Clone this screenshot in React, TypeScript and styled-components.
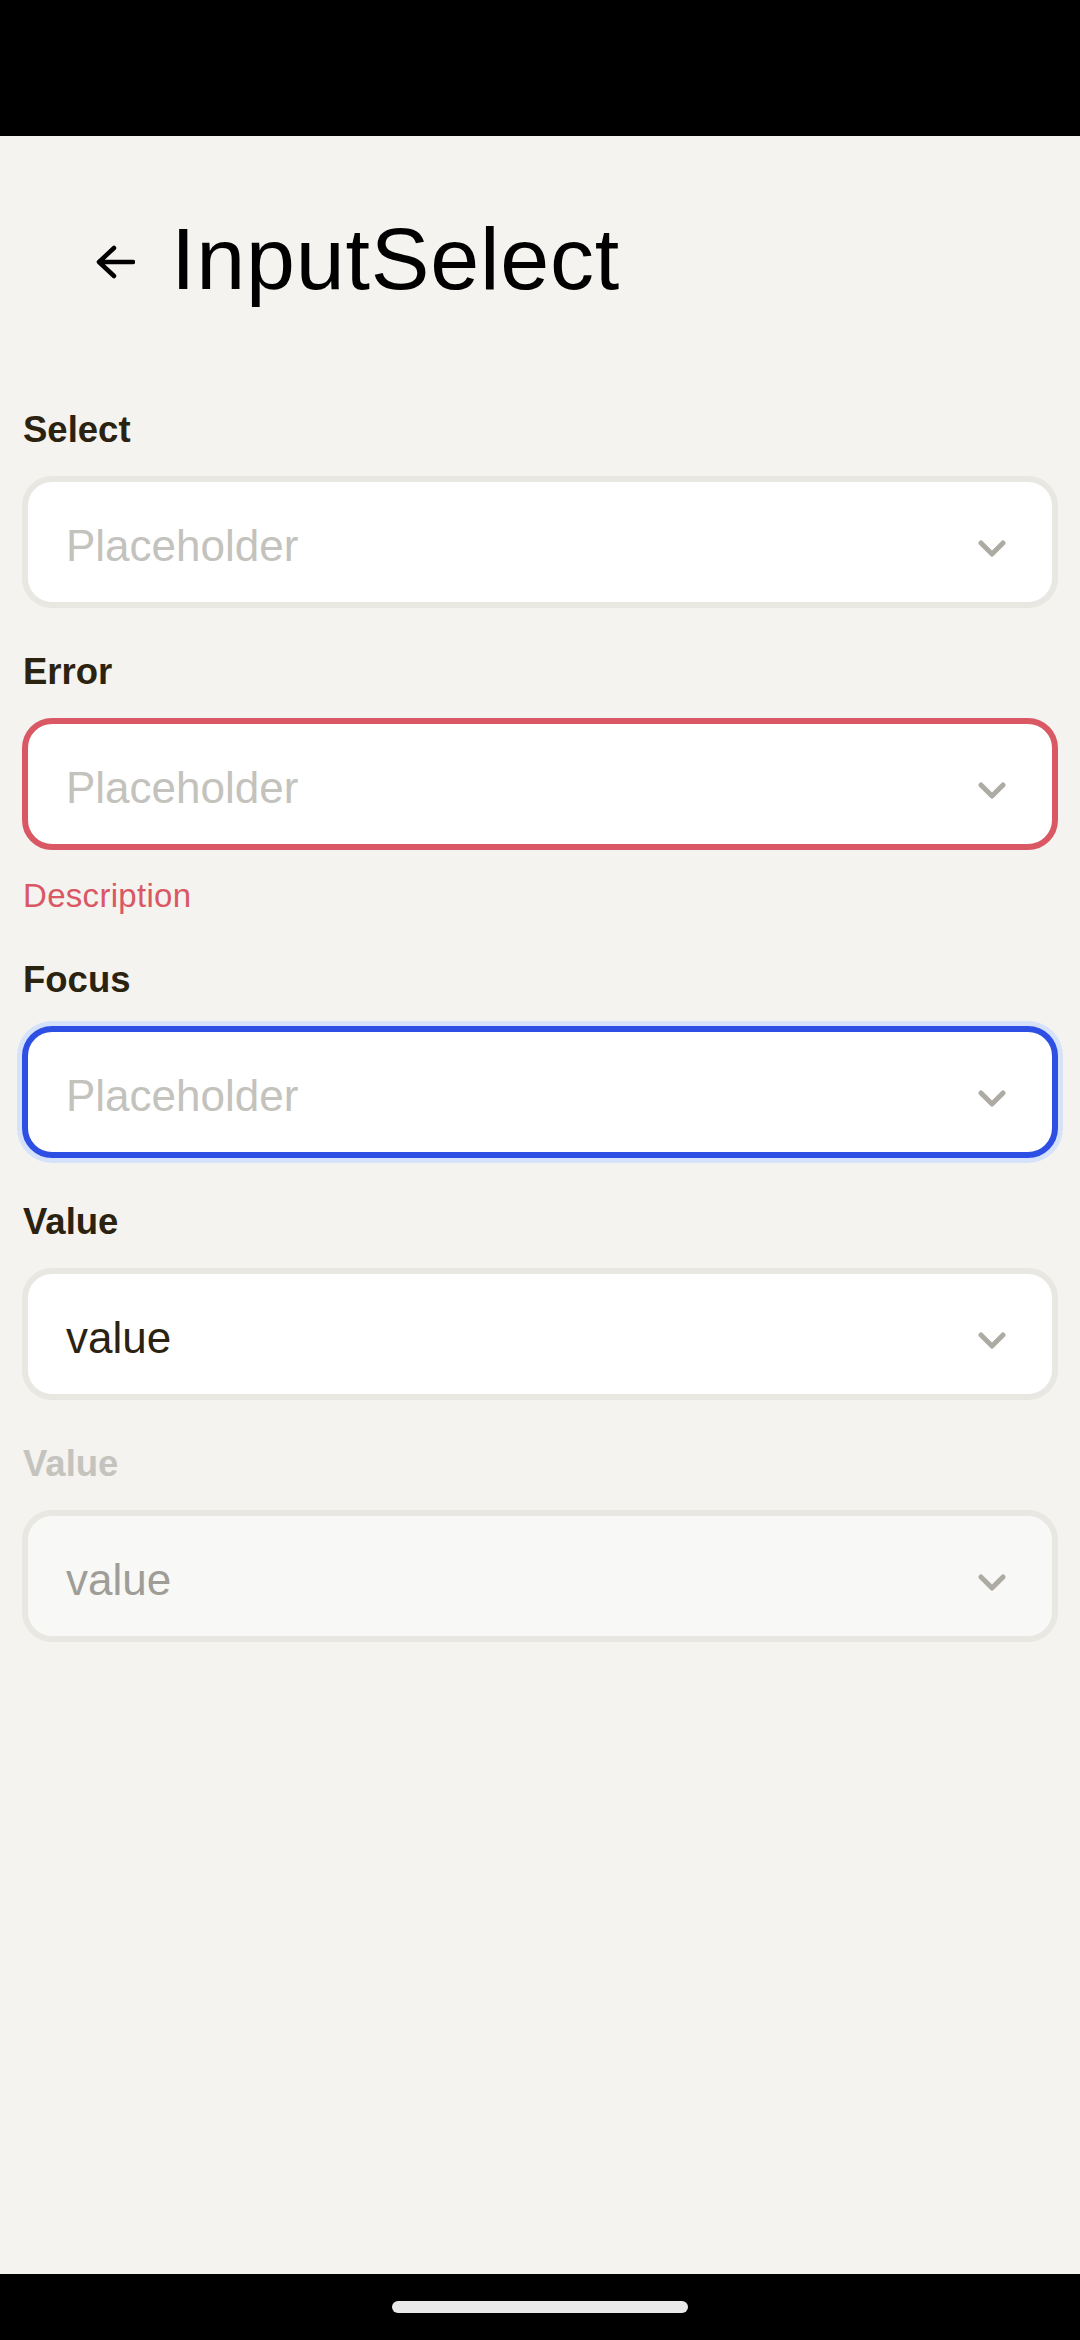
import React from "react";
import styled, { createGlobalStyle, css } from "styled-components";

const Global = createGlobalStyle`
  html, body { margin: 0; padding: 0; background: #F4F3EF; }
  body { font-family: "Liberation Sans", Arial, sans-serif; }
  * { box-sizing: border-box; }
`;

const Screen = styled.div`
  min-height: 2340px;
  display: flex;
  flex-direction: column;
  background: #F4F3EF;
`;

const StatusBar = styled.div`
  height: 136px;
  flex-shrink: 0;
  background: #000;
`;

const Header = styled.header`
  display: flex;
  align-items: center;
  gap: 36px;
  padding: 73px 0 0 95px;
`;

const BackButton = styled.button`
  display: flex;
  align-items: center;
  justify-content: center;
  padding: 0;
  margin-top: 6px;
  border: none;
  background: none;
  width: 40px;
  height: 34px;
`;

const Title = styled.h1`
  margin: 0;
  font-size: 88px;
  line-height: 100px;
  font-weight: 400;
  letter-spacing: 0.8px;
  color: #000;
`;

const Fields = styled.main`
  flex: 1;
  display: flex;
  flex-direction: column;
  gap: 42px;
  padding: 99px 22px 0;
`;

const Field = styled.div`
  display: flex;
  flex-direction: column;
`;

const Label = styled.label<{ $disabled?: boolean }>`
  font-size: 36.5px;
  line-height: 44px;
  font-weight: 700;
  margin-bottom: 24px;
  padding-left: 1px;
  color: ${(p) => (p.$disabled ? "#C4C3BE" : "#2B2310")};
`;

type Variant = "default" | "error" | "focus" | "disabled";

const Box = styled.div<{ $variant: Variant }>`
  height: 132px;
  display: flex;
  align-items: center;
  padding: 0 46px 0 38px;
  border-radius: 30px;
  border: 6px solid #E8E7E2;
  background: #fff;
  ${(p) =>
    p.$variant === "error" &&
    css`
      border-color: #D95864;
    `}
  ${(p) =>
    p.$variant === "focus" &&
    css`
      border-color: #2D4FE4;
      box-shadow: 0 0 0 5px #D6E1FA;
    `}
  ${(p) =>
    p.$variant === "disabled" &&
    css`
      background: #F8F8F6;
    `}
`;

const BoxText = styled.span<{ $tone: "placeholder" | "value" | "disabled" }>`
  flex: 1;
  padding-top: 7px;
  font-size: 44px;
  color: ${(p) =>
    p.$tone === "placeholder" ? "#C3C2BD" : p.$tone === "disabled" ? "#9F9D97" : "#2B2310"};
`;

const Chevron = styled.svg`
  width: 28px;
  height: 18px;
  margin-top: 13px;
  flex-shrink: 0;
`;

const Description = styled.div`
  margin-top: 26px;
  padding-left: 1px;
  font-size: 33px;
  line-height: 40px;
  letter-spacing: 0.3px;
  color: #D95864;
`;

const NavBar = styled.div`
  height: 66px;
  flex-shrink: 0;
  background: #000;
  display: flex;
  justify-content: center;
  padding-top: 27px;
`;

const HomeIndicator = styled.div`
  width: 296px;
  height: 12px;
  border-radius: 6px;
  background: #E9E9E9;
`;

const ArrowIcon = () => (
  <svg width="40" height="34" viewBox="0 0 40 34" fill="none">
    <path
      d="M38 17H4M19 3L4 17L19 31"
      stroke="#000"
      strokeWidth="4.5"
      strokeLinecap="round"
      strokeLinejoin="round"
    />
  </svg>
);

const ChevronIcon = () => (
  <Chevron viewBox="0 0 28 18" fill="none">
    <polyline
      points="3,3 14,14 25,3"
      stroke="#ADABA4"
      strokeWidth="5"
      strokeLinecap="round"
      strokeLinejoin="round"
    />
  </Chevron>
);

type SelectProps = {
  label: string;
  text: string;
  variant?: Variant;
  isValue?: boolean;
  description?: string;
};

const SelectField = ({ label, text, variant = "default", isValue, description }: SelectProps) => {
  const disabled = variant === "disabled";
  const tone = isValue ? (disabled ? "disabled" : "value") : "placeholder";
  return (
    <Field>
      <Label $disabled={disabled}>{label}</Label>
      <Box $variant={variant}>
        <BoxText $tone={tone}>{text}</BoxText>
        <ChevronIcon />
      </Box>
      {description && <Description>{description}</Description>}
    </Field>
  );
};

export default function App() {
  return (
    <>
      <Global />
      <Screen>
        <StatusBar />
        <Header>
          <BackButton aria-label="Back">
            <ArrowIcon />
          </BackButton>
          <Title>InputSelect</Title>
        </Header>
        <Fields>
          <SelectField label="Select" text="Placeholder" />
          <SelectField label="Error" text="Placeholder" variant="error" description="Description" />
          <SelectField label="Focus" text="Placeholder" variant="focus" />
          <SelectField label="Value" text="value" isValue />
          <SelectField label="Value" text="value" isValue variant="disabled" />
        </Fields>
        <NavBar>
          <HomeIndicator />
        </NavBar>
      </Screen>
    </>
  );
}
